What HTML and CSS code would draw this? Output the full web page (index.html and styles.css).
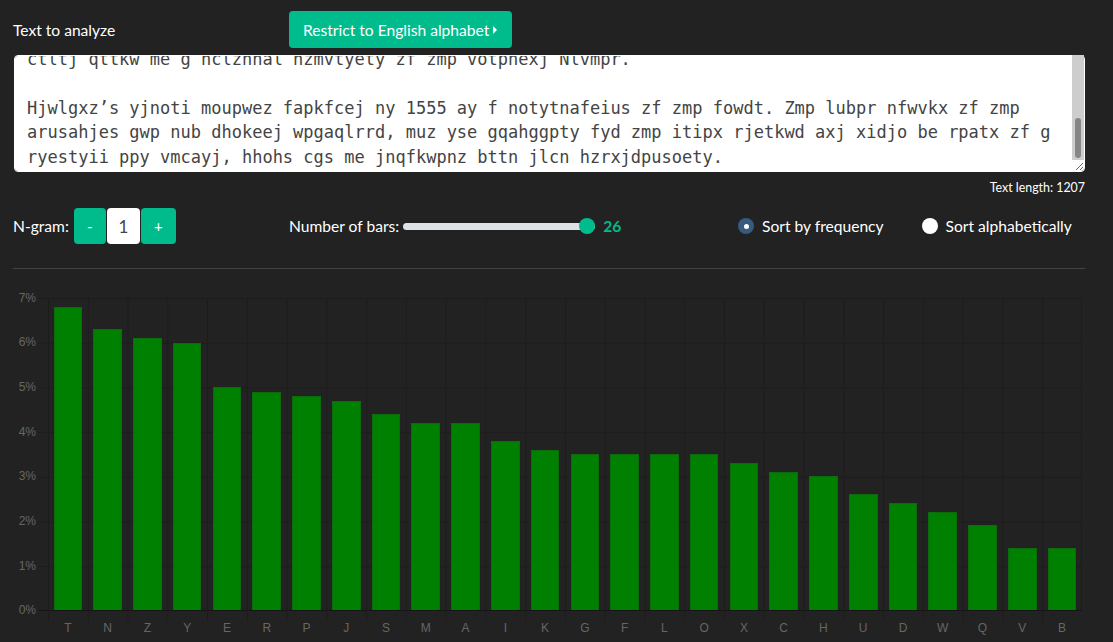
FILE: index.html
```html
<!DOCTYPE html>
<html lang="en">
<head>
<meta charset="utf-8">
<title>Frequency analysis</title>
<link rel="stylesheet" href="styles.css">
</head>
<body>
<div class="page">
  <div class="header">
    <label class="field-label" for="text">Text to analyze</label>
    <div><button class="btn btn-success">Restrict to English alphabet<span class="caret-right"></span></button></div>
  </div>

  <div class="text-wrap">
    <textarea id="text" class="text-input" spellcheck="false">Ahi Vkgmjxpo Pnuwfzr cay f zdhqlwyaj zf Bkqoxmnev nrwtdg oqghjycx, vyemkufz bd Ahiobrcet Lmpwydx xp 1532. Ak pjoqwk xaz flbtcr jyfds zf dmeqz, ngivtk vso uwlkr, pcmgywt hf tbojsle zmp kjfqvyzn. Fso rdqxzh hmzkawe hgxy ujltyb ytncpwo sdk qmbvxzik, cye dqwlf etzm grohxy pktjuve ve nzixqg ebc wodmlo.

Zmp cfjwvq oyxek rltb zmp kgoahyd dxqmezv zf rsyt tjxelf, plwcyn hoxiy jmk ba yvgfqlz xp Wcneyhd ak 1547. Rhupo oqxmlbt, zmp ysnarw lbduyhe zf kcvtqg odhwzer xs dpyfmzu mo hbc rfkwqgne vdpx, lwy snoka zbjyci dfeq ajxrmohb xetgky ytnflv. Mq pbfgz awe eolrkxy hbvdm sl vgkw qenzmtuo ofwz puai, lrgh nvyaxcf ox dkljsyh zu zmp obwf wsfalty. Yjnvgk tpbos fcq mnodgjr xalw rpwez zi vpkoqmh, ynerh dfiwb ke ghuovya
ctltj qttkw me g hclzhhal hzmvtyety zf zmp votphexj Nlvmpr.

Hjwlgxz’s yjnoti moupwez fapkfcej ny 1555 ay f notytnafeius zf zmp fowdt. Zmp lubpr nfwvkx zf zmp arusahjes gwp nub dhokeej wpgaqlrrd, muz yse gqahggpty fyd zmp itipx rjetkwd axj xidjo be rpatx zf g ryestyii ppy vmcayj, hhohs cgs me jnqfkwpnz bttn jlcn hzrxjdpusoety.</textarea>
    <div class="scroll-track"><div class="scroll-thumb"></div></div>
  </div>
  <div class="text-length">Text length: 1207</div>

  <div class="controls">
    <div class="ngram">
      <span class="ctl-label">N-gram:</span>
      <div class="stepper">
        <button class="btn btn-success step">-</button>
        <span class="step-value">1</span>
        <button class="btn btn-success step step-plus">+</button>
      </div>
    </div>
    <div class="bars-count">
      <span class="ctl-label">Number of bars:</span>
      <div class="slider"><div class="slider-track"></div><div class="slider-thumb"></div></div>
      <span class="slider-value">26</span>
    </div>
    <div class="sorts">
      <label class="radio"><span class="radio-dot checked"></span>Sort by frequency</label>
      <label class="radio"><span class="radio-dot"></span>Sort alphabetically</label>
    </div>
  </div>

  <hr class="divider">

  <div class="chart">
    <div class="y-labels">
      <span>7%</span><span>6%</span><span>5%</span><span>4%</span><span>3%</span><span>2%</span><span>1%</span><span>0%</span>
    </div>
    <div class="y-ticks"></div>
    <div class="plot">
      <div class="slot"><div class="bar" style="height:97.14%"></div></div>
      <div class="slot"><div class="bar" style="height:90.0%"></div></div>
      <div class="slot"><div class="bar" style="height:87.14%"></div></div>
      <div class="slot"><div class="bar" style="height:85.71%"></div></div>
      <div class="slot"><div class="bar" style="height:71.43%"></div></div>
      <div class="slot"><div class="bar" style="height:70.0%"></div></div>
      <div class="slot"><div class="bar" style="height:68.57%"></div></div>
      <div class="slot"><div class="bar" style="height:67.14%"></div></div>
      <div class="slot"><div class="bar" style="height:62.86%"></div></div>
      <div class="slot"><div class="bar" style="height:60.0%"></div></div>
      <div class="slot"><div class="bar" style="height:60.0%"></div></div>
      <div class="slot"><div class="bar" style="height:54.29%"></div></div>
      <div class="slot"><div class="bar" style="height:51.43%"></div></div>
      <div class="slot"><div class="bar" style="height:50.0%"></div></div>
      <div class="slot"><div class="bar" style="height:50.0%"></div></div>
      <div class="slot"><div class="bar" style="height:50.0%"></div></div>
      <div class="slot"><div class="bar" style="height:50.0%"></div></div>
      <div class="slot"><div class="bar" style="height:47.14%"></div></div>
      <div class="slot"><div class="bar" style="height:44.29%"></div></div>
      <div class="slot"><div class="bar" style="height:42.86%"></div></div>
      <div class="slot"><div class="bar" style="height:37.14%"></div></div>
      <div class="slot"><div class="bar" style="height:34.29%"></div></div>
      <div class="slot"><div class="bar" style="height:31.43%"></div></div>
      <div class="slot"><div class="bar" style="height:27.14%"></div></div>
      <div class="slot"><div class="bar" style="height:20.0%"></div></div>
      <div class="slot"><div class="bar" style="height:20.0%"></div></div>
    </div>
    <div class="corner"></div>
    <div class="corner"></div>
    <div class="x-ticks"></div>
    <div class="corner"></div>
    <div class="corner"></div>
    <div class="x-labels">
      <span>T</span><span>N</span><span>Z</span><span>Y</span><span>E</span><span>R</span><span>P</span><span>J</span><span>S</span><span>M</span><span>A</span><span>I</span><span>K</span><span>G</span><span>F</span><span>L</span><span>O</span><span>X</span><span>C</span><span>H</span><span>U</span><span>D</span><span>W</span><span>Q</span><span>V</span><span>B</span>
    </div>
  </div>
</div>
<script src="script.js"></script>
</body>
</html>
```

FILE: styles.css
```css
* { box-sizing: border-box; }

html, body {
  margin: 0;
  background: #222222;
}

body {
  font-family: Lato, "Noto Sans", sans-serif;
  font-size: 15.6px;
  color: #ffffff;
  overflow: hidden;
}

.page {
  padding: 0 28px 0 13px;
}

.header {
  display: grid;
  grid-template-columns: 276px auto;
  align-items: center;
  padding-top: 11px;
}

.field-label {
  font-size: 15.6px;
}

.btn {
  font-family: Lato, "Noto Sans", sans-serif;
  font-size: 15.6px;
  color: #ffffff;
  border: none;
  border-radius: 4px;
  cursor: pointer;
}

.btn-success {
  background: #00bc8c;
}

.header .btn {
  height: 37px;
  padding: 0 15px 0 14px;
  display: inline-flex;
  align-items: center;
}

.caret-right {
  display: inline-block;
  width: 0;
  height: 0;
  margin-left: 4px;
  margin-top: 1px;
  border-left: 4px solid #ffffff;
  border-top: 4px solid transparent;
  border-bottom: 4px solid transparent;
}

.text-wrap {
  position: relative;
  margin-top: 7px;
  margin-left: 1px;
}

.text-input {
  display: block;
  width: 100%;
  height: 117px;
  padding: 6px 24px 2px 12px;
  border: 1px solid #ffffff;
  border-radius: 4px;
  background: #ffffff;
  color: #444444;
  font-family: "DejaVu Sans Mono", monospace;
  font-size: 17px;
  line-height: 24.5px;
  resize: vertical;
  outline: none;
}

.scroll-track {
  position: absolute;
  top: 0;
  right: 1px;
  width: 12px;
  height: 105px;
  background: #cdcdcd;
}

.scroll-thumb {
  position: absolute;
  left: 3px;
  right: 3px;
  top: 63px;
  height: 40px;
  border-radius: 4px;
  background: #868686;
}

.text-length {
  margin-top: 7px;
  text-align: right;
  font-size: 12.4px;
  line-height: 18px;
}

.controls {
  display: grid;
  grid-template-columns: 276px 449px auto;
  align-items: center;
  margin-top: 11px;
  height: 36px;
}

.ngram, .bars-count, .sorts {
  display: flex;
  align-items: center;
}

.stepper {
  display: flex;
  margin-left: 5px;
  gap: 1px;
}

.step {
  width: 32px;
  height: 36px;
  padding: 0;
  font-size: 15px;
}

.step-plus {
  width: 35px;
}

.step-value {
  width: 33px;
  height: 36px;
  background: #ffffff;
  border-radius: 4px;
  color: #444444;
  font-size: 17px;
  display: flex;
  align-items: center;
  justify-content: center;
}

.slider {
  position: relative;
  width: 192px;
  height: 16px;
  margin-left: 4px;
  display: flex;
  align-items: center;
}

.slider-track {
  width: 100%;
  height: 7px;
  border-radius: 4px;
  background: #dee2e6;
}

.slider-thumb {
  position: absolute;
  right: 0;
  top: 0;
  width: 16px;
  height: 16px;
  border-radius: 50%;
  background: #00bc8c;
}

.slider-value {
  margin-left: 8px;
  color: #00bc8c;
  font-weight: 700;
  font-size: 15.6px;
}

.sorts {
  gap: 38px;
}

.radio {
  display: flex;
  align-items: center;
}

.radio-dot {
  width: 16px;
  height: 16px;
  border-radius: 50%;
  background: #ffffff;
  margin-right: 8px;
  display: flex;
  align-items: center;
  justify-content: center;
}

.radio-dot.checked {
  background: #375a7f;
}

.radio-dot.checked::after {
  content: "";
  width: 5px;
  height: 5px;
  border-radius: 50%;
  background: #ffffff;
}

.divider {
  margin: 24px 0 0 0;
  border: none;
  border-top: 1px solid #444444;
  height: 0;
}

.chart {
  display: grid;
  grid-template-columns: 25px 10px 1034px;
  grid-template-rows: 313px 10px 16px;
  margin-top: 29px;
  font-family: "Liberation Sans", Arial, sans-serif;
  font-size: 12px;
  color: #666666;
}

.y-labels {
  display: flex;
  flex-direction: column;
  justify-content: space-between;
  padding-right: 2px;
  margin-top: -1px;
}

.y-labels span {
  height: 1px;
  display: flex;
  align-items: center;
  justify-content: flex-end;
}

.y-ticks {
  background-image:
    linear-gradient(to top, #161616 1px, transparent 1px),
    linear-gradient(to bottom, #1c1c1c 1px, transparent 1px);
  background-size: 100% 100%, 100% calc(100% / 7);
}

.plot {
  display: flex;
  align-items: flex-end;
  background-image:
    linear-gradient(to top, #161616 1px, transparent 1px),
    linear-gradient(to left, #1c1c1c 1px, transparent 1px),
    linear-gradient(to bottom, #1c1c1c 1px, transparent 1px),
    linear-gradient(to right, #1c1c1c 1px, transparent 1px);
  background-size: 100% 100%, 100% 100%, 100% calc(100% / 7), calc(100% / 26) 100%;
}

.slot {
  flex: 1;
  height: 100%;
  display: flex;
  align-items: flex-end;
  justify-content: center;
  padding-bottom: 1px;
}

.bar {
  width: 72%;
  background: #008000;
  border: 1px solid #0a6c0a;
  border-bottom: none;
}

.x-ticks {
  background-image: linear-gradient(to right, #1c1c1c 1px, transparent 1px);
  background-size: calc(100% / 26) 100%;
}

.x-labels {
  display: flex;
  line-height: 14px;
}

.x-labels span {
  flex: 1;
  text-align: center;
}
```

FILE: script.js
```js
var t = document.querySelector('.text-input');
t.scrollTop = t.scrollHeight;
```
